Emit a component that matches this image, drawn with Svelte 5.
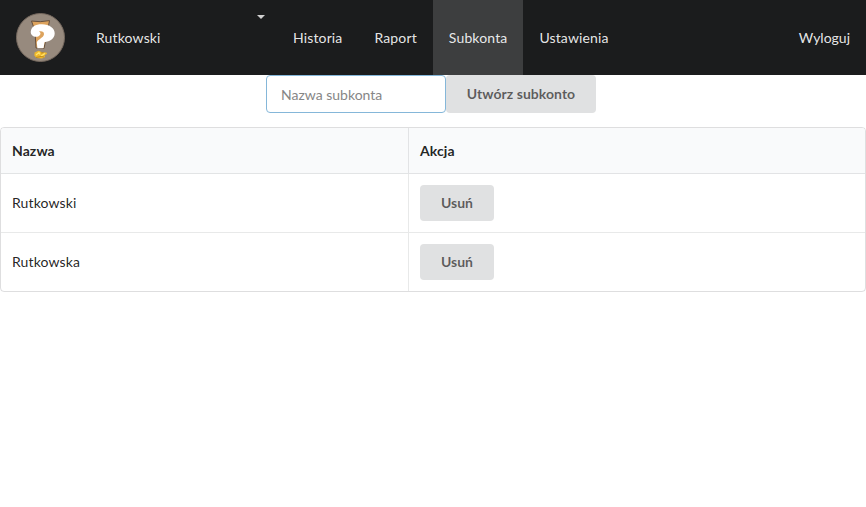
<script>
  const links = ['Historia', 'Raport', 'Subkonta', 'Ustawienia'];
  const active = 'Subkonta';
  const rows = ['Rutkowski', 'Rutkowska'];
  let name = $state('');
</script>

<nav class="menu">
  <div class="item logo">
    <svg width="49" height="49" viewBox="0 0 49 49" aria-hidden="true">
      <circle cx="24.5" cy="24.5" r="24" fill="#978a7e" stroke="#76695f" stroke-width="1" />
      <path d="M15.5 8Q24 9.6 33.5 7.6L31.5 18L28 35.5L20 35L19 18Z" fill="#dda35d" stroke="#66503d" stroke-width="1" />
      <path
        d="M14.8 18.3C15.5 13.6 19.5 11.2 26 11.3C33.5 11.5 38.8 15.2 38.7 20.3C38.7 25.7 34 28.7 28.5 29.2L27.5 35.2H21.4L20.8 29.5C21.8 26 27.6 25 28 21.2C28.1 18.8 25.8 17.9 23 18.6C25.2 19.8 25 22 22.6 23.3C19 24.8 14.2 23 14.8 18.3Z"
        fill="#fff"
      />
      <path d="M18.6 39.5L22.5 37.8L26 39.3L30.5 39.4L31 41L28.5 42L29 44L26 45.5L20.5 45L18.3 42.5Z" fill="#efb82b" />
      <path d="M20 42L23 39.5L24 41.5M25 43L29 40.5" fill="none" stroke="#ffe36c" stroke-width="1.3" />
      <path d="M20 44.5L25 43.5L28 44M25 40L27.5 39.5" fill="none" stroke="#a9761a" stroke-width=".7" />
    </svg>
  </div>
  <div class="item dropdown">
    <span>Rutkowski</span>
    <i class="caret"></i>
  </div>
  {#each links as link}
    <div class="item" class:active={link === active}>{link}</div>
  {/each}
  <div class="item right">Wyloguj</div>
</nav>

<form class="create">
  <input type="text" placeholder="Nazwa subkonta" bind:value={name} />
  <button class="add" type="button">Utwórz subkonto</button>
</form>

<table>
  <thead>
    <tr><th class="first">Nazwa</th><th>Akcja</th></tr>
  </thead>
  <tbody>
    {#each rows as row}
      <tr>
        <td>{row}</td>
        <td><button type="button">Usuń</button></td>
      </tr>
    {/each}
  </tbody>
</table>

<style>
  :global(body) {
    margin: 0;
    background: #fff;
    font-family: Lato, sans-serif;
    font-size: 14px;
    line-height: 20px;
    color: rgba(0, 0, 0, 0.87);
  }
  .menu {
    display: flex;
    height: 75px;
    background: #1b1c1d;
    color: rgba(255, 255, 255, 0.9);
  }
  .item {
    display: flex;
    align-items: center;
    box-sizing: border-box;
    padding: 1px 16px 0;
    line-height: 14px;
    letter-spacing: 0.14px;
  }
  .logo {
    width: 80px;
    padding-top: 0;
  }
  .logo svg {
    flex: none;
  }
  .dropdown {
    width: 197px;
    justify-content: space-between;
  }
  .caret {
    align-self: flex-start;
    margin: 14px -4px 0 0;
    width: 0;
    height: 0;
    border: 4px solid transparent;
    border-top-color: rgba(255, 255, 255, 0.8);
    border-bottom: 0;
  }
  .active {
    background: #3d3e3f;
  }
  .right {
    margin-left: auto;
    letter-spacing: 0;
  }
  .create {
    display: flex;
    margin: 0 0 14px 266px;
  }
  input {
    box-sizing: border-box;
    width: 180px;
    height: 38px;
    padding: 0 14px;
    border: 1px solid #85b7d9;
    border-radius: 4px;
    outline: 0;
    background: #fff;
    font: 14px Lato, sans-serif;
    color: rgba(0, 0, 0, 0.87);
  }
  input::placeholder {
    color: #868686;
    opacity: 1;
  }
  button {
    display: block;
    width: 74px;
    height: 36px;
    padding: 0;
    border: 0;
    border-radius: 4px;
    background: #e0e1e2;
    font: 700 14px/14px Lato, sans-serif;
    color: rgba(0, 0, 0, 0.6);
  }
  .add {
    width: 150px;
    height: 38px;
    letter-spacing: 0.04px;
  }
  table {
    width: 100%;
    table-layout: fixed;
    border: 1px solid rgba(34, 36, 38, 0.15);
    border-radius: 4px;
    border-collapse: separate;
    border-spacing: 0;
  }
  th,
  td {
    box-sizing: border-box;
    padding: 11px;
    text-align: left;
    border-left: 1px solid rgba(34, 36, 38, 0.1);
  }
  th:first-child,
  td:first-child {
    border-left: 0;
  }
  th {
    height: 46px;
    background: #f9fafb;
    border-bottom: 1px solid rgba(34, 36, 38, 0.1);
    font-weight: 700;
    letter-spacing: 0.08px;
  }
  th:first-child {
    border-top-left-radius: 3px;
  }
  th:last-child {
    border-top-right-radius: 3px;
  }
  .first {
    width: 407px;
  }
  td {
    height: 58px;
    letter-spacing: 0.12px;
  }
  tbody tr + tr td {
    height: 59px;
    border-top: 1px solid rgba(34, 36, 38, 0.1);
  }
</style>
